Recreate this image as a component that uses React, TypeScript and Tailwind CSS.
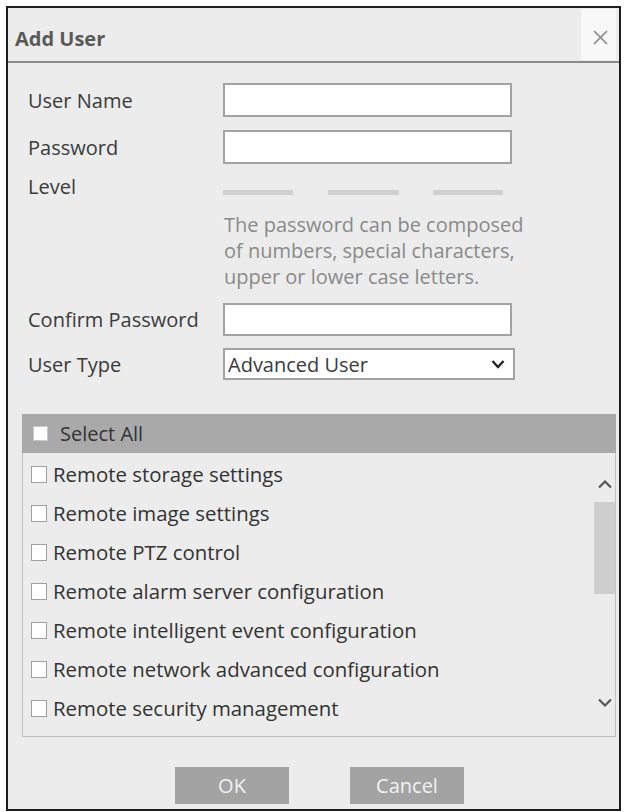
import React from 'react';

const perms = [
  'Remote storage settings',
  'Remote image settings',
  'Remote PTZ control',
  'Remote alarm server configuration',
  'Remote intelligent event configuration',
  'Remote network advanced configuration',
  'Remote security management',
];

const Chevron = ({ up = false }: { up?: boolean }) => (
  <svg width="16" height="10" viewBox="0 0 16 10" className="block mx-auto">
    <polyline
      points={up ? '2,8.5 8,2.5 14,8.5' : '2,1.5 8,7.5 14,1.5'}
      fill="none"
      stroke="#555"
      strokeWidth="2.2"
    />
  </svg>
);

const Field = ({ label, top, h = 34 }: { label: string; top: string; h?: number }) => (
  <div className={`flex items-center ${top}`}>
    <span className="w-[215px] pl-[20px]">{label}</span>
    <div
      className={`w-[289px] bg-white border-2 border-[#a3a3a3] ${h === 34 ? 'h-[34px]' : 'h-[33px]'}`}
    />
  </div>
);

export default function App() {
  return (
    <div className="min-h-screen bg-white pt-[6px] pl-[6px] font-['Open_Sans',sans-serif] text-[20px] leading-[27px] text-[#3b3b3b]">
      <div className="w-[615px] h-[805px] border-2 border-[#1e1e1e] bg-[#ececec] flex flex-col">
        {/* header */}
        <div className="flex justify-between h-[55px] border-b-2 border-[#8a8a8a]">
          <h1 className="pl-[7px] pt-[17px] font-bold text-[#5a5a5a]">Add User</h1>
          <button className="mt-[1px] mr-[3px] w-[35px] h-[51px] bg-[#f8f8f8] flex items-center justify-center pl-[4px] pt-[5px]">
            <svg width="15" height="15" viewBox="0 0 15 15">
              <path d="M1 1L14 14M14 1L1 14" stroke="#8a8a8a" strokeWidth="1.7" fill="none" />
            </svg>
          </button>
        </div>

        {/* form */}
        <Field label="User Name" top="mt-[20px]" />
        <Field label="Password" top="mt-[13px]" />
        <div className="flex mt-[9px] h-[27px]">
          <span className="w-[215px] pl-[20px]">Level</span>
          <div className="flex items-start pt-[17px]">
            <span className="w-[70px] h-[5px] bg-[#d0d0d0]" />
            <span className="ml-[35px] w-[71px] h-[5px] bg-[#d0d0d0]" />
            <span className="ml-[34px] w-[70px] h-[5px] bg-[#d0d0d0]" />
          </div>
        </div>
        <div className="mt-[12px] ml-[216px] leading-[26px] text-[#8a8a8a]">
          <div>The password can be composed</div>
          <div>of numbers, special characters,</div>
          <div>upper or lower case letters.</div>
        </div>
        <Field label="Confirm Password" top="mt-[13px]" h={33} />
        <div className="flex items-center mt-[12px]">
          <span className="w-[215px] pl-[20px]">User Type</span>
          <div className="w-[292px] h-[32px] bg-white border-2 border-[#a3a3a3] flex items-center justify-between pl-[3px] pr-[8px]">
            <span>Advanced User</span>
            <svg width="14" height="10" viewBox="0 0 14 10">
              <polyline points="1.5,2 7,8 12.5,2" fill="none" stroke="#222" strokeWidth="2.4" />
            </svg>
          </div>
        </div>

        {/* permissions */}
        <div className="mt-[34px] ml-[14px] mr-[3px] h-[39px] bg-[#a9a9a9] flex items-center pl-[11px]">
          <span className="w-[15px] h-[15px] bg-white border border-[#c8c8c8]" />
          <span className="ml-[12px] text-[#333]">Select All</span>
        </div>
        <div className="ml-[14px] mr-[3px] h-[284px] border border-t-0 border-[#c2c2c2] flex">
          <ul className="flex-1 pt-[2px] pl-[8px] text-[20.4px]">
            {perms.map((p) => (
              <li key={p} className="h-[39px] flex items-center">
                <span className="w-[16px] h-[17px] bg-white border border-[#a0a0a0]" />
                <span className="ml-[6px] text-[#333]">{p}</span>
              </li>
            ))}
          </ul>
          <div className="w-[21px] flex flex-col">
            <div className="mt-[26px]">
              <Chevron up />
            </div>
            <div className="mt-[13px] h-[92px] bg-[#cecece]" />
            <div className="mt-[104px]">
              <Chevron />
            </div>
          </div>
        </div>

        {/* buttons */}
        <div className="mt-[30px] flex pl-[167px] gap-[61px]">
          <button className="w-[114px] h-[37px] bg-[#a3a3a3] text-[#f2f2f2]">OK</button>
          <button className="w-[114px] h-[37px] bg-[#a3a3a3] text-[#f2f2f2]">Cancel</button>
        </div>
      </div>
    </div>
  );
}
